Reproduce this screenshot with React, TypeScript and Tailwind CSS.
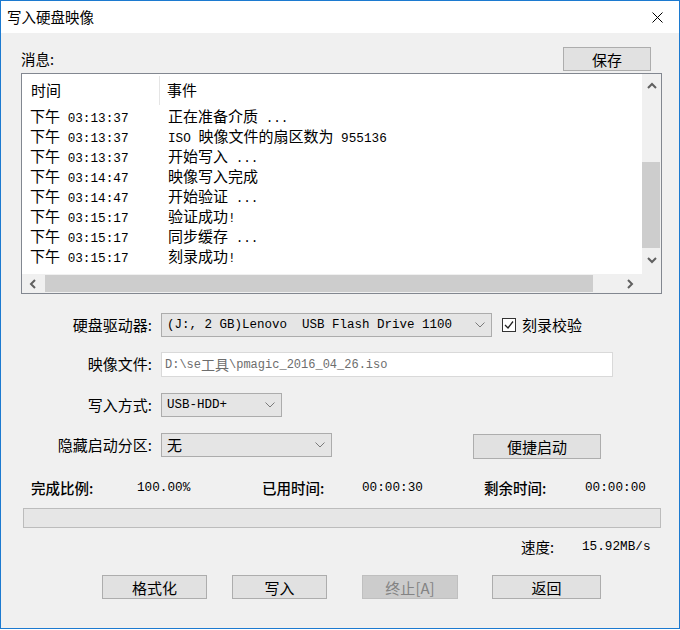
import React from "react";

const CJK_RE = /[\u2E80-\u9FFF\uF900-\uFAFF\uFF00-\uFFEF\u3000-\u303F]/;

function Mixed({ text, cjkClass }: { text: string; cjkClass: string }) {
  const runs: { cjk: boolean; s: string }[] = [];
  for (const ch of Array.from(text)) {
    const c = CJK_RE.test(ch);
    const last = runs[runs.length - 1];
    if (last && last.cjk === c) last.s += ch;
    else runs.push({ cjk: c, s: ch });
  }
  return (
    <>
      {runs.map((r, i) =>
        r.cjk ? (
          <span key={i} className={cjkClass}>
            {r.s}
          </span>
        ) : (
          <span key={i}>{r.s}</span>
        )
      )}
    </>
  );
}

const ROWS: [string, string][] = [
  ["下午 03:13:37", "正在准备介质 ..."],
  ["下午 03:13:37", "ISO 映像文件的扇区数为 955136"],
  ["下午 03:13:37", "开始写入 ..."],
  ["下午 03:14:47", "映像写入完成"],
  ["下午 03:14:47", "开始验证 ..."],
  ["下午 03:15:17", "验证成功!"],
  ["下午 03:15:17", "同步缓存 ..."],
  ["下午 03:15:17", "刻录成功!"],
];

const LIST_CJK = "font-['Noto_Sans_CJK_SC',sans-serif] text-[15px]";

function Chevron({ dir }: { dir: "up" | "down" | "left" | "right" }) {
  const pts =
    dir === "up"
      ? "1,6 5,2 9,6"
      : dir === "down"
      ? "1,2 5,6 9,2"
      : dir === "left"
      ? "6,1 2,5 6,9"
      : "3,1 7,5 3,9";
  return (
    <svg width="10" height="10" viewBox="0 0 10 10">
      <polyline points={pts} fill="none" stroke="#606060" strokeWidth="2" />
    </svg>
  );
}

function ComboArrow() {
  return (
    <svg width="10" height="6" viewBox="0 0 10 6">
      <polyline points="0.5,0.5 5,5 9.5,0.5" fill="none" stroke="#7a7a7a" strokeWidth="1" />
    </svg>
  );
}

function Button({
  label,
  className,
  disabled,
}: {
  label: string;
  className: string;
  disabled?: boolean;
}) {
  return (
    <div
      className={
        (disabled
          ? "bg-[#cccccc] border-[#bfbfbf] text-[#838383] "
          : "bg-[#e1e1e1] border-[#adadad] text-black ") +
        "border flex items-center justify-center font-['Noto_Sans_CJK_SC',sans-serif] text-[15px] leading-none " +
        className
      }
    >
      <Mixed text={label} cjkClass="" />
    </div>
  );
}

function ListView() {
  return (
    <div className="mt-[2px] h-[221px] border border-[#828790] bg-white flex flex-col">
      <div className="flex flex-1 min-h-0">
        <div className="flex-1 flex flex-col">
          <div className="h-[33px] flex items-stretch font-['Noto_Sans_CJK_SC',sans-serif] text-[15px]">
            <div className="w-[137px] pl-[9px] flex items-center">时间</div>
            <div className="w-px bg-[#e5e5e5] my-[2px]" />
            <div className="pl-[7px] flex items-center">事件</div>
          </div>
          {ROWS.map(([t, e], i) => (
            <div
              key={i}
              className="h-[20px] flex items-center font-['Liberation_Mono',monospace] text-[12.7px] whitespace-pre leading-[20px]"
            >
              <div className="w-[138px] pl-[8px]">
                <Mixed text={t} cjkClass={LIST_CJK} />
              </div>
              <div className="pl-[8px]">
                <Mixed text={e} cjkClass={LIST_CJK} />
              </div>
            </div>
          ))}
        </div>
        <div className="w-[19px] bg-[#f0f0f0] flex flex-col">
          <div className="h-[26px] flex items-center justify-center">
            <Chevron dir="up" />
          </div>
          <div className="h-[62px]" />
          <div className="h-[86px] mr-[1px] bg-[#cdcdcd]" />
          <div className="flex-1 flex items-center justify-center">
            <Chevron dir="down" />
          </div>
        </div>
      </div>
      <div className="h-[19px] flex bg-[#f0f0f0]">
        <div className="flex-1 flex items-stretch">
          <div className="w-[23px] flex items-center justify-center">
            <Chevron dir="left" />
          </div>
          <div className="w-[548px] my-[1px] bg-[#cdcdcd]" />
          <div className="flex-1" />
          <div className="w-[24px] flex items-center justify-center">
            <Chevron dir="right" />
          </div>
        </div>
        <div className="w-[19px]" />
      </div>
    </div>
  );
}

function Label({ text }: { text: string }) {
  return (
    <div className="w-[131px] mr-[9px] text-right font-['Noto_Sans_CJK_SC',sans-serif] text-[15px] leading-[24px] self-start">
      {text}
    </div>
  );
}

function Combo({
  text,
  className,
  mono,
}: {
  text: string;
  className: string;
  mono?: boolean;
}) {
  return (
    <div
      className={
        "h-[24px] border border-[#acacac] bg-[#e5e5e5] flex items-center justify-between pl-[5px] pr-[6px] " +
        className
      }
    >
      <div
        className={
          mono
            ? "font-['Liberation_Mono',monospace] text-[12.5px] whitespace-pre"
            : "font-['Noto_Sans_CJK_SC',sans-serif] text-[15px]"
        }
      >
        {text}
      </div>
      <ComboArrow />
    </div>
  );
}

export default function App() {
  return (
    <div className="w-[680px] h-[630px] bg-white font-['Noto_Sans_CJK_SC',sans-serif] text-black">
      <div className="w-[680px] h-[629px] border border-[#1c7ad0] bg-[#f0f0f0] flex flex-col">
        {/* Title bar */}
        <div className="h-[32px] bg-white flex items-center justify-between pl-[6px] pr-[16px]">
          <div className="text-[14.5px] leading-none">写入硬盘映像</div>
          <svg width="11" height="11" viewBox="0 0 11 11">
            <line x1="0.5" y1="0.5" x2="10.5" y2="10.5" stroke="#000" strokeWidth="1" />
            <line x1="10.5" y1="0.5" x2="0.5" y2="10.5" stroke="#000" strokeWidth="1" />
          </svg>
        </div>

        {/* Body */}
        <div className="flex-1 flex flex-col pl-[20px] pr-[17px]">
          <div className="mt-[14px] h-[24px] flex items-center justify-between">
            <div className="text-[14.5px] leading-none">消息:</div>
            <Button label="保存" className="w-[88px] h-[24px] mr-[11px]" />
          </div>

          <ListView />

          {/* form */}
          <div className="mt-[19px] h-[24px] flex items-center">
            <Label text="硬盘驱动器:" />
            <Combo text="(J:, 2 GB)Lenovo  USB Flash Drive 1100" className="w-[331px]" mono />
            <div className="ml-[10px] w-[14px] h-[14px] border border-[#333333] bg-white flex items-center justify-center">
              <svg width="12" height="12" viewBox="0 0 12 12">
                <polyline points="2,6 5,9 10,2.5" fill="none" stroke="#222" strokeWidth="1.3" />
              </svg>
            </div>
            <div className="ml-[6px] text-[15px]">刻录校验</div>
          </div>

          <div className="mt-[15px] h-[25px] flex items-center">
            <Label text="映像文件:" />
            <div className="w-[452px] h-[25px] border border-[#d9d9d9] bg-white flex items-center pl-[3px] font-['Liberation_Mono',monospace] text-[12px] text-[#6d6d6d] whitespace-pre">
              <Mixed
                text="D:\se工具\pmagic_2016_04_26.iso"
                cjkClass="font-['Noto_Sans_CJK_SC',sans-serif] text-[14px]"
              />
            </div>
          </div>

          <div className="mt-[16px] h-[24px] flex items-center">
            <Label text="写入方式:" />
            <Combo text="USB-HDD+" className="w-[121px]" mono />
          </div>

          <div className="mt-[16px] h-[26px] flex items-start">
            <Label text="隐藏启动分区:" />
            <Combo text="无" className="w-[171px]" />
            <Button label="便捷启动" className="ml-[141px] mt-[1px] w-[128px] h-[25px]" />
          </div>

          {/* stats */}
          <div className="mt-[19px] h-[20px] flex items-center whitespace-pre">
            <div className="ml-[10px] w-[106px] text-[14.5px] font-medium">完成比例:</div>
            <div className="w-[125px] font-['Liberation_Mono',monospace] text-[12.7px]">100.00%</div>
            <div className="w-[100px] text-[14.5px] font-medium">已用时间:</div>
            <div className="w-[122px] font-['Liberation_Mono',monospace] text-[12.7px]">00:00:30</div>
            <div className="w-[101px] text-[14.5px] font-medium">剩余时间:</div>
            <div className="font-['Liberation_Mono',monospace] text-[12.7px]">00:00:00</div>
          </div>

          <div className="mt-[10px] h-[20px] ml-[2px] mr-[1px] border border-[#bcbcbc] bg-[#e6e6e6]" />

          <div className="mt-[9px] h-[20px] flex items-center whitespace-pre">
            <div className="ml-[500px] w-[61px] text-[14.5px]">速度:</div>
            <div className="font-['Liberation_Mono',monospace] text-[12.7px]">15.92MB/s</div>
          </div>

          <div className="mt-[18px] h-[24px] flex items-center">
            <Button label="格式化" className="ml-[81px] w-[105px] h-[24px]" />
            <Button label="写入" className="ml-[25px] w-[95px] h-[24px]" />
            <Button label="终止[A]" className="ml-[35px] w-[96px] h-[24px]" disabled />
            <Button label="返回" className="ml-[34px] w-[109px] h-[24px]" />
          </div>
        </div>
      </div>
    </div>
  );
}
